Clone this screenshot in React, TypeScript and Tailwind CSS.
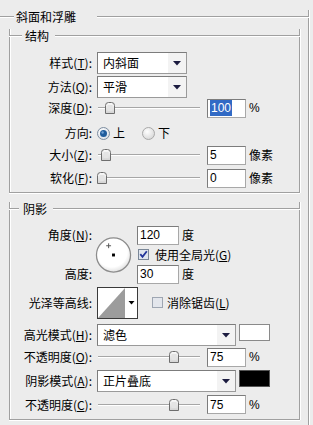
import React from "react";

const cjk = "font-['Noto_Sans_CJK_SC','Noto_Sans',sans-serif] text-[12px] leading-none text-black";
const num = "font-['Liberation_Sans',sans-serif] text-[12px] leading-none text-black";

function Line({ className = "" }: { className?: string }) {
  return <div className={`h-[2px] border-t border-b border-t-[#a0a0a0] border-b-white ${className}`} />;
}

function Group({
  title,
  leftClass,
  titleClass,
  className = "",
  children,
}: {
  title: string;
  leftClass: string;
  titleClass: string;
  className?: string;
  children?: React.ReactNode;
}) {
  return (
    <div
      className={`border-x border-b border-[#a0a0a0] shadow-[inset_1px_0_0_#fff,1px_0_0_#fff,0_1px_0_#fff] ${className}`}
    >
      <div className="-mx-px -mt-[6px] flex h-[14px] items-center">
        <Line className={leftClass} />
        <span className={`${cjk} whitespace-nowrap leading-[14px] ${titleClass}`}>{title}</span>
        <Line className="flex-1" />
      </div>
      {children}
    </div>
  );
}

function U({ c }: { c: string }) {
  return <span className="underline underline-offset-[1px]">{c}</span>;
}

function Label({ children }: { children: React.ReactNode }) {
  return <div className={`${cjk} w-[82px] shrink-0 whitespace-nowrap text-right`}>{children}</div>;
}

function Arrow() {
  return (
    <svg width="8" height="5" viewBox="0 0 8 5">
      <polygon points="0,0 8,0 4,4.5" fill="#1c1c40" />
    </svg>
  );
}

function Select({ text, className }: { text: string; className: string }) {
  return (
    <div
      className={`flex items-stretch border border-[#9a9a9a] border-t-[#7c7c7c] border-l-[#7c7c7c] bg-white ${className}`}
    >
      <div className={`${cjk} flex flex-1 items-center pl-[5px]`}>{text}</div>
      <div className="flex w-[18px] items-center justify-center bg-[#f3f3f3]">
        <Arrow />
      </div>
    </div>
  );
}

function Field({ children, className = "" }: { children: React.ReactNode; className?: string }) {
  return (
    <div
      className={`flex h-[19px] w-[39px] shrink-0 items-center border border-[#a8a8a8] border-t-[#7c7c7c] border-l-[#7c7c7c] bg-white pl-[2px] ${num} ${className}`}
    >
      {children}
    </div>
  );
}

function Slider({ left }: { left: number }) {
  return (
    <div className="relative h-[14px] w-[110px] shrink-0">
      <div className="absolute left-[1px] top-[6px] h-[2px] w-[102px] border-t border-b border-t-[#a6a6a6] border-b-white" />
      <svg
        className="absolute top-[1px]"
        style={{ left }}
        width="10"
        height="12"
        viewBox="0 0 10 12"
      >
        <defs>
          <linearGradient id="thumbg" x1="0" y1="0" x2="0" y2="1">
            <stop offset="0" stopColor="#fbfbfb" />
            <stop offset="1" stopColor="#d2d2d2" />
          </linearGradient>
        </defs>
        <path
          d="M0.5,3.5 Q0.5,0.5 3.5,0.5 H6.5 Q9.5,0.5 9.5,3.5 V11.5 H0.5 Z"
          fill="url(#thumbg)"
          stroke="#6e6e6e"
        />
        <rect x="2.5" y="3" width="5" height="6" fill="#e4e4e4" />
      </svg>
    </div>
  );
}

function Radio({ on }: { on: boolean }) {
  return (
    <svg width="13" height="13" viewBox="0 0 13 13" className="shrink-0">
      <defs>
        <radialGradient id={on ? "rgon" : "rgoff"} cx="0.4" cy="0.35" r="0.7">
          <stop offset="0" stopColor="#ffffff" />
          <stop offset="1" stopColor={on ? "#d8dee6" : "#d6d6d6"} />
        </radialGradient>
      </defs>
      <circle cx="6.5" cy="6.5" r="6" fill={`url(#${on ? "rgon" : "rgoff"})`} stroke={on ? "#7d8d9f" : "#a8a8a8"} />
      {on && (
        <>
          <circle cx="6.5" cy="6.5" r="3.5" fill="#1f5c9c" />
          <circle cx="5.6" cy="5.5" r="1.2" fill="#6fa0d4" />
        </>
      )}
    </svg>
  );
}

function Check({ on }: { on: boolean }) {
  return (
    <svg width="11" height="11" viewBox="0 0 11 11" className="shrink-0">
      <rect x="0.5" y="0.5" width="10" height="10" fill={on ? "#dfe5ee" : "#e3e6ec"} stroke={on ? "#7a8797" : "#9ea6b2"} />
      {on && <path d="M2.3,5.2 L4.5,7.8 L8.8,2.2" fill="none" stroke="#22349a" strokeWidth="1.8" />}
    </svg>
  );
}

function Swatch({ className }: { className: string }) {
  return <div className={`ml-[3px] h-[17px] w-[31px] self-start border ${className}`} />;
}

export default function App() {
  return (
    <div className="h-[425px] w-[313px] overflow-hidden bg-[#ececec] pt-[16px]">
      <Group
        title="斜面和浮雕"
        leftClass="w-[16px]"
        titleClass="pl-[2px] pr-[21px]"
        className="-ml-[2px] h-[420px] w-[311px] border-b-0"
      >
        {/* 结构 */}
        <Group
          title="结构"
          leftClass="w-[13px]"
          titleClass="pl-[3px] pr-[6px]"
          className="ml-[10px] mt-[11px] w-[291px] pb-[4px]"
        >
          <div className="mt-[9px] flex h-[22px] items-center">
            <Label>
              样式(<U c="T" />):
            </Label>
            <Select text="内斜面" className="ml-[5px] h-[22px] w-[90px]" />
          </div>
          <div className="mt-[2px] flex h-[22px] items-center">
            <Label>
              方法(<U c="Q" />):
            </Label>
            <Select text="平滑" className="ml-[5px] h-[22px] w-[90px]" />
          </div>
          <div className="flex h-[20px] items-center">
            <Label>
              深度(<U c="D" />):
            </Label>
            <div className="ml-[5px] flex items-center">
              <Slider left={8} />
              <Field>
                <span className="bg-[#316ac5] px-[1px] py-[2px] text-white">100</span>
              </Field>
              <span className={`${num} ml-[3px]`}>%</span>
            </div>
          </div>
          <div className="mt-[5px] flex h-[20px] items-center">
            <Label>方向:</Label>
            <div className="ml-[5px] flex items-center">
              <Radio on />
              <span className={`${cjk} ml-[3px]`}>上</span>
              <span className="ml-[17px]">
                <Radio on={false} />
              </span>
              <span className={`${cjk} ml-[3px]`}>下</span>
            </div>
          </div>
          <div className="mt-[2px] flex h-[20px] items-center">
            <Label>
              大小(<U c="Z" />):
            </Label>
            <div className="ml-[5px] flex items-center">
              <Slider left={4} />
              <Field>5</Field>
              <span className={`${cjk} ml-[3px]`}>像素</span>
            </div>
          </div>
          <div className="mt-[3px] flex h-[20px] items-center">
            <Label>
              软化(<U c="F" />):
            </Label>
            <div className="ml-[5px] flex items-center">
              <Slider left={0} />
              <Field>0</Field>
              <span className={`${cjk} ml-[3px]`}>像素</span>
            </div>
          </div>
        </Group>

        {/* 阴影 */}
        <Group
          title="阴影"
          leftClass="w-[10px]"
          titleClass="pl-[4px] pr-[6px]"
          className="ml-[10px] mt-[15px] w-[291px] pb-[5px]"
        >
          <div className="mt-[10px] grid grid-cols-[82px_40px_auto] grid-rows-[18px_21px_18px]">
            <div className="flex items-center">
              <Label>
                角度(<U c="N" />):
              </Label>
            </div>
            <div className="row-span-3 flex items-center">
              <svg width="38" height="38" viewBox="0 0 38 38" className="ml-[3px]">
                <defs>
                  <radialGradient id="dial" cx="0.45" cy="0.4" r="0.6">
                    <stop offset="0.75" stopColor="#ffffff" />
                    <stop offset="1" stopColor="#e2e2e2" />
                  </radialGradient>
                </defs>
                <circle cx="19" cy="19" r="17.5" fill="url(#dial)" stroke="#8c8c8c" strokeWidth="1.3" />
                <path d="M11.5,9.5 H16.5 M14,7 V12" stroke="#555" strokeWidth="1" />
                <rect x="17.5" y="17.5" width="3" height="3" fill="#000" />
              </svg>
            </div>
            <div className="flex items-center pl-[5px]">
              <Field className="h-[18px] w-[42px]">120</Field>
              <span className={`${cjk} ml-[3px]`}>度</span>
            </div>
            <div />
            <div className="flex items-center pl-[6px]">
              <Check on />
              <span className={`${cjk} ml-[6px] whitespace-nowrap`}>
                使用全局光(<U c="G" />)
              </span>
            </div>
            <div className="flex items-center">
              <Label>高度:</Label>
            </div>
            <div className="flex items-center pl-[5px]">
              <Field className="h-[18px] w-[42px]">30</Field>
              <span className={`${cjk} ml-[3px]`}>度</span>
            </div>
          </div>

          <div className="mt-[4px] flex h-[31px] items-center">
            <Label>光泽等高线:</Label>
            <svg width="41" height="32" viewBox="0 0 41 32" className="ml-[5px]">
              <rect x="0.5" y="0.5" width="40" height="31" fill="#ffffff" stroke="#3a3a3a" />
              <polygon points="1,31 28,1 28,31" fill="#9c9c9c" />
              <polygon points="31.5,14 37.5,14 34.5,17.5" fill="#000" />
            </svg>
            <span className="ml-[14px]">
              <Check on={false} />
            </span>
            <span className={`${cjk} ml-[4px] whitespace-nowrap`}>
              消除锯齿(<U c="L" />)
            </span>
          </div>

          <div className="mt-[6px] flex h-[22px] items-center">
            <Label>
              高光模式(<U c="H" />):
            </Label>
            <Select text="滤色" className="ml-[5px] h-[22px] w-[139px]" />
            <Swatch className="border-[#8a8a8a] bg-white" />
          </div>
          <div className="mt-[2px] flex h-[18px] items-center">
            <Label>
              不透明度(<U c="O" />):
            </Label>
            <div className="ml-[5px] flex items-center">
              <Slider left={72} />
              <Field className="h-[18px]">75</Field>
              <span className={`${num} ml-[3px]`}>%</span>
            </div>
          </div>
          <div className="mt-[4px] flex h-[22px] items-center">
            <Label>
              阴影模式(<U c="A" />):
            </Label>
            <Select text="正片叠底" className="ml-[5px] h-[22px] w-[139px]" />
            <Swatch className="border-[#555] bg-black" />
          </div>
          <div className="mt-[3px] flex h-[19px] items-center">
            <Label>
              不透明度(<U c="C" />):
            </Label>
            <div className="ml-[5px] flex items-center">
              <Slider left={72} />
              <Field className="h-[19px]">75</Field>
              <span className={`${num} ml-[3px]`}>%</span>
            </div>
          </div>
        </Group>
      </Group>
    </div>
  );
}
